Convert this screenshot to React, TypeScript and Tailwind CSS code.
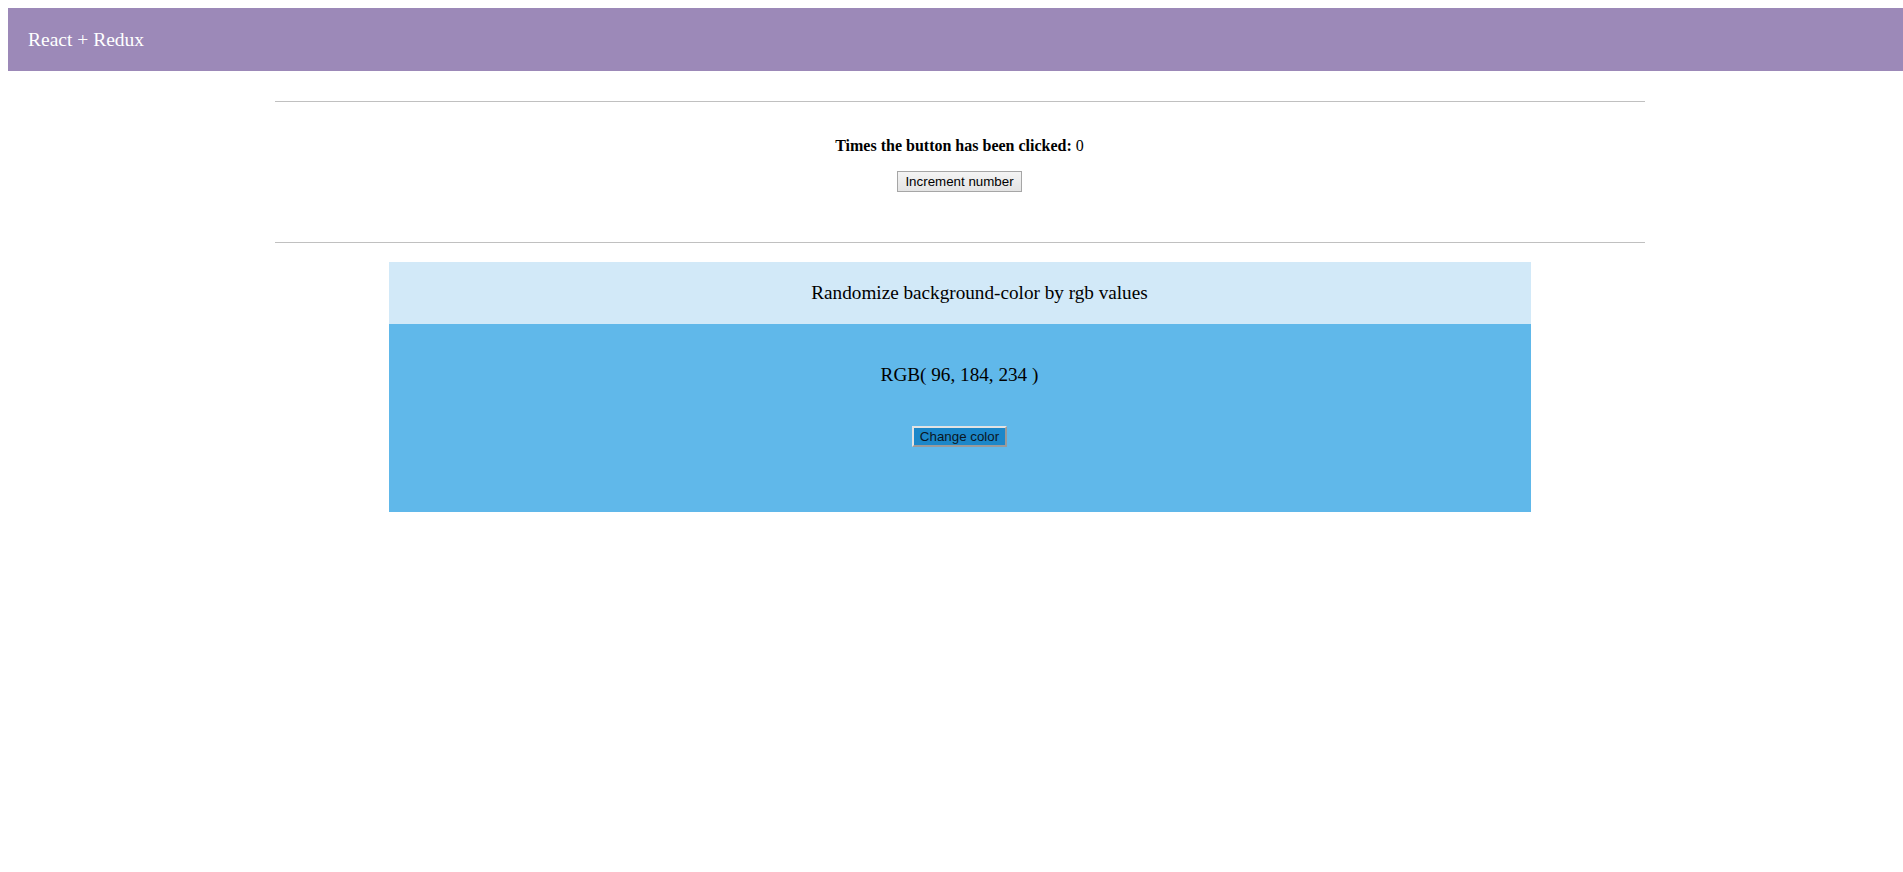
import React, { useState } from "react";

export default function App() {
  const [count, setCount] = useState(0);
  const [rgb, setRgb] = useState<[number, number, number]>([96, 184, 234]);

  const randomize = () => {
    setRgb([
      Math.floor(Math.random() * 256),
      Math.floor(Math.random() * 256),
      Math.floor(Math.random() * 256),
    ]);
  };

  return (
    <div className="overflow-hidden min-h-[872px] bg-white">
      <div className="ml-2 mt-2 w-[1903px] font-['Liberation_Serif',serif] text-black">
        <header className="h-[63px] bg-[#9c89b8] flex items-center pl-[20px]">
          <span className="text-[19.5px] leading-[22px] text-white">React + Redux</span>
        </header>

        <div className="mx-auto w-[1370px] mt-[30px] border-t border-[#c0c0c0]" />

        <section className="mx-auto w-[1370px] flex flex-col items-center pt-[35px] pb-[50px]">
          <p className="text-[16px] leading-[18px]">
            <b>Times the button has been clicked:</b> {count}
          </p>
          <button
            onClick={() => setCount(count + 1)}
            className="mt-[16px] font-['Liberation_Sans',sans-serif] text-[13.33px] leading-[15px] px-[7px] py-[2px] border border-[#a6a6a6] bg-gradient-to-b from-[#f4f4f4] to-[#e4e4e4] text-black"
          >
            Increment number
          </button>
        </section>

        <div className="mx-auto w-[1370px] border-t border-[#c0c0c0]" />

        <div className="mx-auto w-[1142px] mt-[19px]">
          <div className="h-[62px] bg-[#d2e9f8] flex items-center justify-center pl-[40px]">
            <h2 className="text-[19.2px] leading-[22px] font-normal">
              Randomize background-color by rgb values
            </h2>
          </div>
          <div
            className="h-[188px] flex flex-col items-center pt-[40px]"
            style={{ backgroundColor: `rgb(${rgb[0]}, ${rgb[1]}, ${rgb[2]})` }}
          >
            <p className="text-[19.2px] leading-[22px]">
              RGB( {rgb[0]}, {rgb[1]}, {rgb[2]} )
            </p>
            <button
              onClick={randomize}
              className="mt-[40px] font-['Liberation_Sans',sans-serif] text-[13.33px] leading-[15px] px-[6px] py-[1px] border-2 border-t-[#e3e3e3] border-l-[#e3e3e3] border-r-[#9a9a9a] border-b-[#9a9a9a] bg-[#1c87c9] text-[#0b1622]"
            >
              Change color
            </button>
          </div>
        </div>
      </div>
    </div>
  );
}
